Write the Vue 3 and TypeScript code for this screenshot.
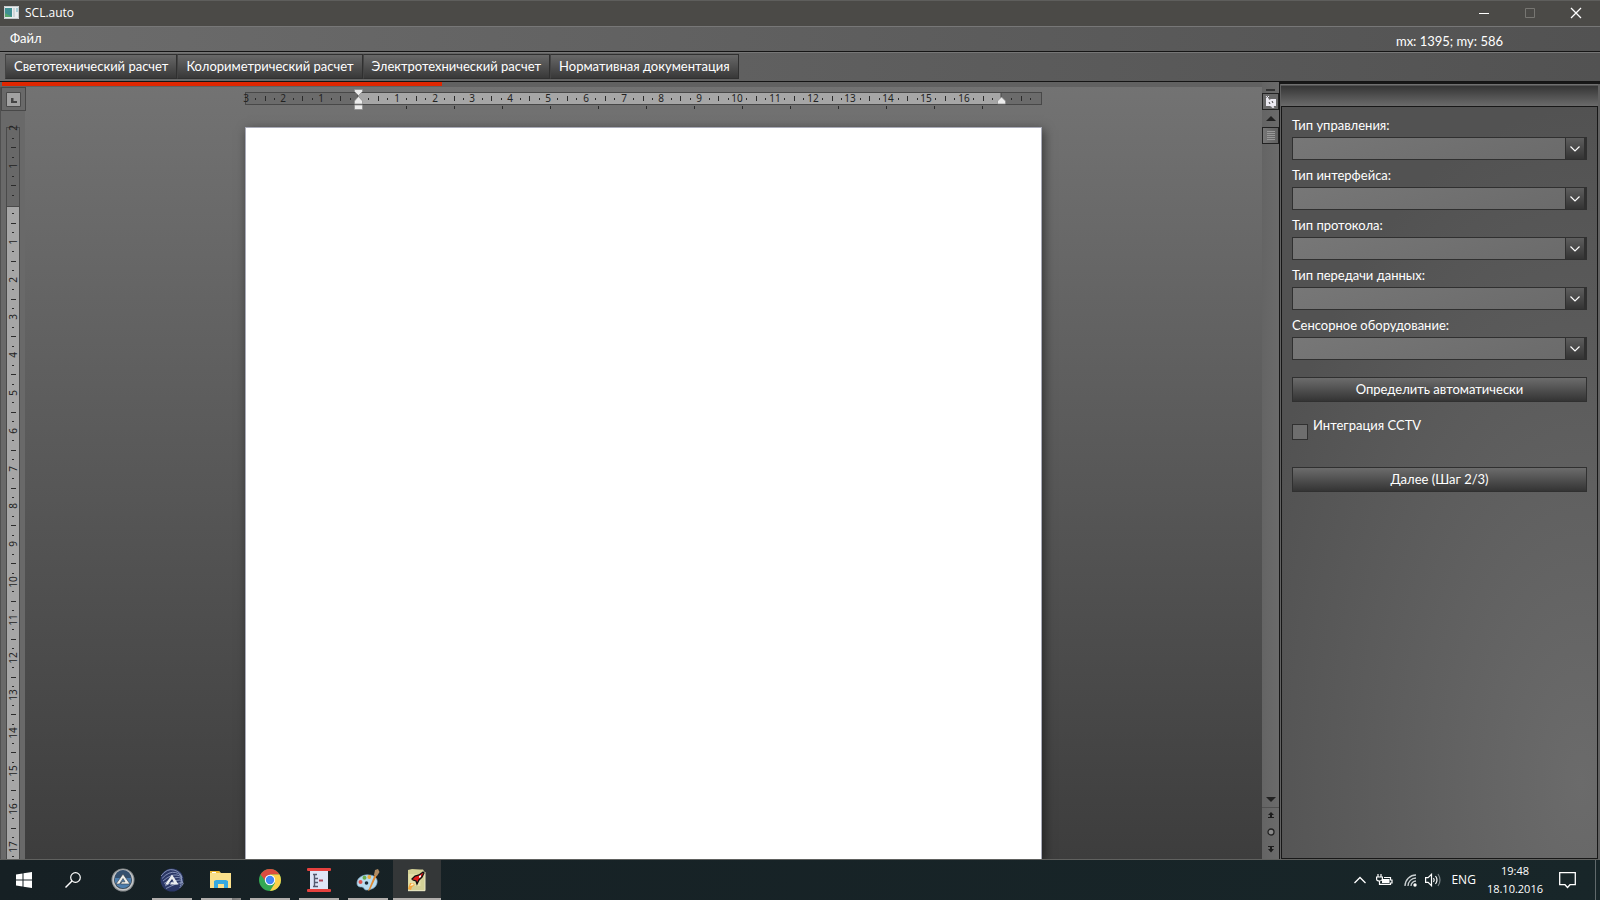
<script setup lang="ts">
import { ref } from 'vue'

interface Mark { at: number; kind: 'num' | 'bar' | 'dot'; label?: string }

const CM = 37.8

function marks(zero: number, from: number, to: number, limit: number): Mark[] {
  const out: Mark[] = []
  for (let q = from * 4; q <= to * 4; q++) {
    const at = Math.round(zero + (q * CM) / 4)
    if (q === 0 || at > limit) continue
    if (q % 4 === 0) {
      if (at < limit - 35) out.push({ at, kind: 'num', label: String(Math.abs(q / 4)) })
    } else out.push({ at, kind: q % 2 === 0 ? 'bar' : 'dot' })
  }
  return out
}

const hMarks = marks(114, -3, 18, 787).filter((m) => Math.abs(m.at - 756) > 3)
const vMarks = [...marks(77, -2, 17, 1000), { at: 729, kind: 'dot' } as Mark]
const tabStops = Array.from({ length: 13 }, (_, i) => 161 + i * 48)

const tabs = ['Светотехнический расчет', 'Колориметрический расчет', 'Электротехнический расчет', 'Нормативная документация']
const fields = ref([
  { id: 'control', label: 'Тип управления:', value: '' },
  { id: 'interface', label: 'Тип интерфейса:', value: '' },
  { id: 'protocol', label: 'Тип протокола:', value: '' },
  { id: 'transfer', label: 'Тип передачи данных:', value: '' },
  { id: 'sensor', label: 'Сенсорное оборудование:', value: '' },
])
const cctv = ref(false)
const progress = ref(34.9)
const waves = [0, 1, 2, 3, 4, 5]
</script>

<template>
  <div class="window">
    <header class="titlebar">
      <svg class="app-icon" width="15" height="13" viewBox="0 0 15 13">
        <rect width="15" height="13" fill="#e9edef" />
        <rect x="1" y="2" width="7" height="9" fill="#3f8f92" />
        <path d="M1 11V7l7 4z" fill="#55a56c" />
        <rect x="9" y="2" width="2" height="9" fill="#cfd6d8" />
        <rect x="12" y="2" width="2" height="4" fill="#a9cfd8" />
        <path d="M.5.5h14v12H.5z" fill="none" stroke="#c4cacc" />
      </svg>
      <span class="app-name">SCL.auto</span>
      <button class="win" aria-label="Minimize"><svg width="12" height="12"><path d="M1 6.500h10" stroke="#fff" /></svg></button>
      <button class="win" aria-label="Maximize" disabled><svg width="12" height="12"><path d="M1.500 1.500h9v9h-9z" fill="none" stroke="#777672" /></svg></button>
      <button class="win" aria-label="Close"><svg width="12" height="12"><path d="M1 1l10 10M11 1L1 11" stroke="#fff" stroke-width="1.300" /></svg></button>
    </header>

    <nav class="menubar">
      <button class="menu">Файл</button>
      <span class="coords">mx: 1395; my: 586</span>
    </nav>

    <nav class="toolbar">
      <button v-for="t in tabs" :key="t" class="tab">{{ t }}</button>
    </nav>

    <main class="body">
      <section class="editor">
        <div class="progress"><div class="bar" :style="{ width: progress + '%' }"></div></div>
        <div class="work">
          <div class="left">
            <button class="corner" aria-label="Tab stop">
              <svg width="15" height="15"><path d="M.5.5h14v14H.5z" fill="#a2a2a2" stroke="#4a4a4a" /><path d="M5 6v5h6V9H7.500V6z" fill="#444" /></svg>
            </button>
            <div class="vruler">
              <svg width="14" height="100%">
                <rect x="0" y="0" width="14" height="100%" fill="#4a4a4a" />
                <rect x="1" y="1" width="12" height="100%" fill="#a6a6a6" />
                <rect x=".5" y=".5" width="13" height="79" fill="#686868" stroke="#4a4a4a" />
                <template v-for="m in vMarks" :key="m.at">
                  <text v-if="m.kind === 'num'" :transform="`translate(11 ${m.at}) rotate(-90)`" class="num">{{ m.label }}</text>
                  <rect v-else-if="m.kind === 'bar'" x="5" :y="m.at" width="5" height="1" fill="#2b2b2b" />
                  <rect v-else x="6" :y="m.at" width="2" height="1" fill="#2b2b2b" />
                </template>
              </svg>
            </div>
          </div>
          <div class="canvas">
            <svg class="hruler" width="797" height="24" viewBox="0 0 797 24">
              <rect x=".5" y="5.500" width="796" height="12" fill="#6b6b6b" stroke="#484848" />
              <rect x="113" y="5.500" width="643" height="12" fill="#a6a6a6" stroke="#484848" />
              <template v-for="m in hMarks" :key="m.at">
                <text v-if="m.kind === 'num'" :x="m.at" y="15" class="num">{{ m.label }}</text>
                <rect v-else-if="m.kind === 'bar'" :x="m.at" y="9" width="1" height="5" fill="#2b2b2b" />
                <rect v-else :x="m.at" y="11" width="1" height="2" fill="#2b2b2b" />
              </template>
              <rect v-for="s in tabStops" :key="s" :x="s" y="19" width="1" height="3" fill="#2b2b2b" />
              <path d="M109.500 2.500h8v2l-4 4-4-4zM109.500 17v-3l4-4.500 4 4.500v3zM109.500 18h8v4.500h-8z" fill="#ececec" stroke="#8a8a8a" stroke-width=".7" />
              <path d="M752.500 17v-3l4-4 4 4v3z" fill="#ececec" stroke="#8a8a8a" stroke-width=".7" />
            </svg>
            <div class="page" role="textbox" aria-label="Document"></div>
          </div>
        </div>
      </section>

      <aside class="scroll">
        <i class="split"></i>
        <button class="sbtn framed" aria-label="Toggle rulers">
          <svg width="14" height="14"><path d="M2 3h2l1 2 2-1h5v7h-2l-2 1-2-1H2z" fill="#eceaf2" /><path d="M2 1l3 4M5 1L3 3M8 10l2 3M10 10l-2 3" stroke="#eceaf2" fill="none" /><path d="M5 7l1 2M8 6l1 2" stroke="#444" /></svg>
        </button>
        <button class="sbtn arrow" aria-label="Scroll up"><svg width="10" height="5"><path d="M0 5l5-5 5 5z" fill="#222" /></svg></button>
        <button class="sbtn framed thumb" aria-label="Scroll thumb"><svg width="8" height="9"><path d="M0 .5h8M0 2.500h8M0 4.500h8M0 6.500h8M0 8.500h8" stroke="#999" /></svg></button>
        <div class="track"></div>
        <button class="sbtn arrow down" aria-label="Scroll down"><svg width="10" height="5"><path d="M0 0h10L5 5z" fill="#222" /></svg></button>
        <button class="sbtn nav" aria-label="Previous page"><svg width="6" height="7"><path d="M3 0l3 3H4v1h2v0H4v1h2v1H0V5h2V3H0z" fill="#1c1c1c" /></svg></button>
        <button class="sbtn nav" aria-label="Browse object"><svg width="8" height="8"><circle cx="4" cy="4" r="3" fill="#8a8a8a" stroke="#222" stroke-width="1.300" /></svg></button>
        <button class="sbtn nav" aria-label="Next page"><svg width="6" height="7"><path d="M0 0h6v1H4v2h2L3 6.500 0 3h2V1H0z" fill="#1c1c1c" /></svg></button>
      </aside>

      <aside class="panel">
        <div class="panel-head"></div>
        <form class="form" @submit.prevent>
          <div v-for="f in fields" :key="f.id" class="field">
            <label :for="f.id">{{ f.label }}</label>
            <div class="combo">
              <select :id="f.id" v-model="f.value"><option value=""></option></select>
              <span class="drop"><svg width="10" height="6"><path d="M.5.5L5 5 9.500.5" fill="none" stroke="#fff" stroke-width="1.200" /></svg></span>
            </div>
          </div>
          <button class="wide auto">Определить автоматически</button>
          <div class="check">
            <input id="cctv" v-model="cctv" type="checkbox" />
            <label for="cctv">Интеграция CCTV</label>
          </div>
          <button class="wide">Далее (Шаг 2/3)</button>
        </form>
      </aside>
    </main>

    <footer class="taskbar">
      <button class="task sys" aria-label="Start">
        <svg width="16" height="16"><path d="M0 2.500l6.500-1v6H0zM7.500 1.300L16 0v7.500H7.500zM0 8.500h6.500v6l-6.500-1zM7.500 8.500H16V16l-8.500-1.300z" fill="#fff" /></svg>
      </button>
      <button class="task sys" aria-label="Search">
        <svg width="16" height="16"><circle cx="10.500" cy="5.500" r="4.800" fill="none" stroke="#fff" stroke-width="1.200" /><path d="M7 9L.5 15.500" stroke="#fff" stroke-width="1.400" /></svg>
      </button>
      <button class="task" aria-label="AutoIt">
        <svg width="24" height="24"><circle cx="12" cy="12" r="11.500" fill="#8a8e90" /><circle cx="12" cy="12" r="9.800" fill="#3a4854" stroke="#c4c6c8" stroke-width="1.500" /><circle cx="12" cy="12" r="8.300" fill="#4d7eae" /><path d="M4 10a8 8 0 0116 0z" fill="#34506f" /><path d="M12 6l7 10H9.500l1.500-2.200h3L12 10.500 8.500 16H5z" fill="#efefec" stroke="#333b42" stroke-width=".6" /></svg>
      </button>
      <button class="task open" aria-label="SciTE">
        <svg width="24" height="24"><circle cx="12" cy="12" r="11.500" fill="#2b3766" /><path v-for="w in waves" :key="w" :d="`M${1 + w} ${8 + w * 2.500}Q${7 + w * 2} ${w * 3} ${14 + w * 1.500} ${2 + w * 2.500}T${22 - w / 2} ${10 + w * 2}`" fill="none" stroke="#8f9cc0" stroke-width=".9" /><path d="M12 6.500l6.500 10H10l1.500-2.200H14l-2-3.600-4 5.800H5z" fill="#eceef0" /></svg>
      </button>
      <button class="task open multi" aria-label="Explorer">
        <svg width="22" height="20"><path d="M0 1h9l2 2h10v15H0z" fill="#fbe08b" /><path d="M0 1h9l1 2H0z" fill="#f0b932" /><path d="M2 2h4v1H2z" fill="#fff" /><path d="M4 18v-7l2-1h10l2 1v7h-4v-4H8v4z" fill="#36a9e1" /></svg>
      </button>
      <button class="task open" aria-label="Chrome">
        <svg width="22" height="22"><circle cx="11" cy="11" r="11" fill="#34a853" /><path d="M1.500 5.500A11 11 0 0120.500 5.500H11L8 14z" fill="#dc4b3e" /><path d="M20.500 5.500A11 11 0 0111 22l5-8-5-8.500z" fill="#fcd14a" /><circle cx="11" cy="11" r="5.200" fill="#fff" /><circle cx="11" cy="11" r="4.200" fill="#4285f4" /></svg>
      </button>
      <button class="task open" aria-label="Diagram editor">
        <svg width="24" height="24"><rect x="3" y="2" width="18" height="20" fill="#dfe5f7" /><rect width="24" height="3" rx="1" fill="#e6413e" /><rect y="21" width="24" height="3" rx="1" fill="#e6413e" /><path d="M6 6.500h4M7.500 7v11M8 10.500h3M8 14.500h3M6 18.500h5" stroke="#555a70" fill="none" stroke-width="1.400" /><path d="M12 12.500h4" stroke="#b14458" stroke-width="2" /></svg>
      </button>
      <button class="task open" aria-label="Paint">
        <svg width="24" height="24"><path d="M1 15C1 10 7 6 13 7c6 0 9 4 8 8-1 5-6 7-11 7-2 0-2-3-4-3s-5 0-5-4z" fill="#b8dcf0" stroke="#7fa9c6" stroke-width=".7" /><circle cx="4.500" cy="14" r="2" fill="#e0524b" /><circle cx="8.500" cy="9.800" r="2" fill="#69ae4c" /><circle cx="13.300" cy="9" r="1.900" fill="#edaa3e" /><circle cx="10.500" cy="15" r="1.800" fill="#1b2c38" /><path d="M12 23l7-17 2 1-7 15z" fill="#e08a32" /><path d="M18 7l1-5 3-1 1.500 3L21 8z" fill="#b08c64" /></svg>
      </button>
      <button class="task open active" aria-label="SCL.auto">
        <svg width="20" height="24"><path d="M1 2l4-1 8 .5h3l2 3V23H1z" fill="#d3d096" /><path d="M1.500 6h12v12h-12z" fill="#e2dfa8" /><path d="M1 22.700h17V4" fill="none" stroke="#e9e8c8" /><path d="M1 21l2-6 3 0 2 2-3 2-1 3z" fill="#f5a63c" /><path d="M5 11l3-3 4-1 4-3 1 1-2 4-3 3-2 4-1-3-3-1z" fill="#e11c1c" stroke="#111" stroke-width="1.300" /><path d="M12 8l2-1v2l-2 1z" fill="#fff" /><path d="M3 18l2-3 2 2z" fill="#fff6cf" /></svg>
      </button>
      <div class="tray">
        <svg width="12" height="8"><path d="M.5 7L6 1.500 11.500 7" fill="none" stroke="#fff" stroke-width="1.300" /></svg>
        <svg class="t-bat" width="17" height="12"><path d="M2 0v3M5 0v3" stroke="#fff" stroke-width="1.200" /><path d="M.6 3h5.800v2Q6 7 3.500 7 .6 7 .6 5zM3.500 7v3.400h11V9h1.500V6h-1.500V3.500H8" fill="none" stroke="#fff" stroke-width="1.200" /><rect x="6" y="5" width="7.500" height="4" fill="#fff" /></svg>
        <svg class="t-wifi" width="13" height="13"><path d="M1 12A11 11 0 0112 1M4 12a8 8 0 018-8M7 12a5 5 0 015-5" fill="none" stroke="#c9cfd1" stroke-width="1.300" /><circle cx="11" cy="11" r="1.700" fill="#fff" /></svg>
        <svg class="t-vol" width="16" height="14"><path d="M.6 4.600h2.500L6.500 1.300v11.400L3.100 9.400H.6z" fill="none" stroke="#fff" stroke-width="1.200" /><path d="M8.500 5q1.500 2 0 4M10.500 3q3 4 0 8" fill="none" stroke="#fff" stroke-width="1.200" /><path d="M13 1q4 6 0 12" fill="none" stroke="#7b8487" stroke-width="1.200" /></svg>
        <span class="lang">ENG</span>
        <time class="clock"><span>19:48</span><span>18.10.2016</span></time>
        <svg class="t-note" width="17" height="17"><path d="M.7.7h15.600v12H11L8.500 15.500 6 12.700H.7z" fill="none" stroke="#fff" stroke-width="1.300" /></svg>
      </div>
    </footer>
  </div>
</template>

<style>
body { margin: 0; overflow: hidden; }
</style>

<style scoped>
* { box-sizing: border-box; }
.window {
  height: 100vh; display: flex; flex-direction: column; overflow: hidden;
  background: #5c5c5c; color: #fff;
  font: 13px/16px Lato, "Liberation Sans", sans-serif;
}
button { font: inherit; color: inherit; padding: 0; border: 0; background: none; }
svg { display: block; flex: none; }
.titlebar {
  height: 27px; flex: none; display: flex; align-items: center; padding: 0 1px 2px 4px;
  background: #4b4a47; border-top: 1px solid #5e5e5c; border-bottom: 1px solid #777;
}
.app-name { margin: 0 auto 0 6px; font: 12px/16px "Open Sans", "Noto Sans", sans-serif; }
.win { width: 46px; height: 23px; display: grid; place-items: center; }
.menubar {
  height: 25px; flex: none; display: flex; align-items: center; justify-content: space-between;
  padding: 0 97px 0 10px; background: linear-gradient(90deg, #6c6c6c, #525252); border-bottom: 1px solid #151515;
}
.menu { padding-bottom: 2px; }
.coords { padding-top: 4px; }
.toolbar {
  height: 30px; flex: none; display: flex; padding: 1px 5px 0;
  background: linear-gradient(90deg, #6c6c6c, #525252); border-top: 1px solid #767676; border-bottom: 1px solid #151515;
}
.tab {
  height: 25px; padding: 0 8px 2px; border: 1px solid #303030; border-left-color: #444;
  background: linear-gradient(#686868, #383838);
}
.body { flex: 1; min-height: 0; display: flex; }
.editor { flex: 1; min-width: 0; display: flex; flex-direction: column; background: linear-gradient(#737373, #3d3d3d); }
.progress { height: 5px; flex: none; padding-left: 2px; background: #616161; }
.bar { height: 4px; background: #e02600; }
.work { flex: 1; min-height: 0; display: flex; }
.left { width: 25px; flex: none; display: flex; flex-direction: column; background: #696969; border-left: 1px solid #505050; }
.corner { width: 25px; height: 24px; flex: none; display: grid; place-items: center; border: 1px solid #484848; }
.vruler { flex: 1; min-height: 0; margin: 16px 0 0 5px; }
.vruler svg { height: 100%; overflow: visible; }
.num { font: 10px "Noto Sans", sans-serif; fill: #222; text-anchor: middle; }
.canvas { flex: 1; min-width: 0; display: flex; flex-direction: column; align-items: center; }
.hruler { overflow: visible; }
.page {
  width: 797px; max-width: 100%; flex: 1; margin-top: 16px; background: #fff;
  border: 1px solid #a9abb8; border-bottom: 0; box-shadow: 2px 3px 10px rgba(0, 0, 0, .5);
}
.scroll {
  width: 17px; flex: none; display: flex; flex-direction: column; align-items: center;
  background: linear-gradient(90deg, #646464, #6b6b6b); padding-top: 7px;
}
.split { width: 9px; height: 2px; margin-bottom: 2px; background: #333; }
.sbtn { width: 100%; height: 17px; flex: none; display: grid; place-items: center; }
.framed { border: 1px solid #222; background: #686868; }
.thumb { background: linear-gradient(90deg, #777, #616161); }
.track { flex: 1; }
.down { border-bottom: 1px solid #505050; }
.nav { padding-bottom: 3px; }
.panel {
  width: 321px; flex: none; display: flex; flex-direction: column; padding: 0 2px 0 1px;
  background: #616161; border-left: 1px solid #171717; border-top: 2px solid #171717;
}
.panel-head { height: 22px; flex: none; background: linear-gradient(#707070 1px, #353535 2px, #6b6b6b); }
.form {
  flex: 1; padding: 10px; border: 1px solid #171717;
  background: radial-gradient(ellipse 110% 90% at 95% 90%, #6b6b6b, #525252);
}
.field { height: 50px; }
.field label { display: block; height: 20px; line-height: 16px; }
.combo { display: grid; grid-template-columns: 1fr 21px; height: 23px; border: 1px solid #303030; }
.combo select {
  grid-area: 1 / 1 / 2 / 3; width: 100%; height: 21px; appearance: none; border: 0; border-radius: 0;
  background: linear-gradient(160deg, #777, #6a6a6a); color: #fff; font: inherit;
}
.drop {
  grid-area: 1 / 2 / 2 / 3; display: grid; place-items: center; pointer-events: none;
  border: 1px solid #303030; border-width: 0 2px 0 1px; background: linear-gradient(#5e5e5e, #343434);
}
.wide {
  display: block; width: 100%; height: 25px; padding-bottom: 2px;
  border: 1px solid #303030; background: linear-gradient(#6c6c6c, #343434);
}
.auto { margin-top: 10px; }
.check { display: flex; gap: 5px; height: 65px; padding-top: 15px; }
.check input {
  appearance: none; width: 16px; height: 16px; margin: 7px 0 0; border: 1px solid #303030; background: #6e6e6e;
}
.check input:checked { background: #ccc; }
.taskbar {
  height: 41px; flex: none; display: flex; align-items: stretch; gap: 1px; padding-left: 1px;
  background: linear-gradient(90deg, #162024, #182629); border-top: 1px solid #60615f;
}
.task { position: relative; width: 48px; flex: none; display: grid; place-items: center; }
.sys { padding-right: 3px; }
.open::after { content: ""; position: absolute; left: 4px; right: 4px; bottom: 0; height: 2px; background: #b1aeac; }
.multi::after { background: linear-gradient(90deg, #b1aeac 31px, #777 31px, #8c8a88); }
.active { background: #343738; }
.active::after { left: 0; right: 0; }
.tray {
  margin: 0 4px 0 auto; display: flex; align-items: center; border-right: 1px solid #60696b;
  font: 11px/18px "Open Sans", "Noto Sans", sans-serif;
}
.t-bat { margin-left: 10px; }
.t-wifi { margin-left: 11px; }
.t-vol { margin-left: 8px; }
.lang { margin-left: 10px; font-size: 12px; }
.clock { display: flex; flex-direction: column; align-items: center; margin-left: 11px; }
.t-note { margin: 0 19px 0 16px; }
</style>
